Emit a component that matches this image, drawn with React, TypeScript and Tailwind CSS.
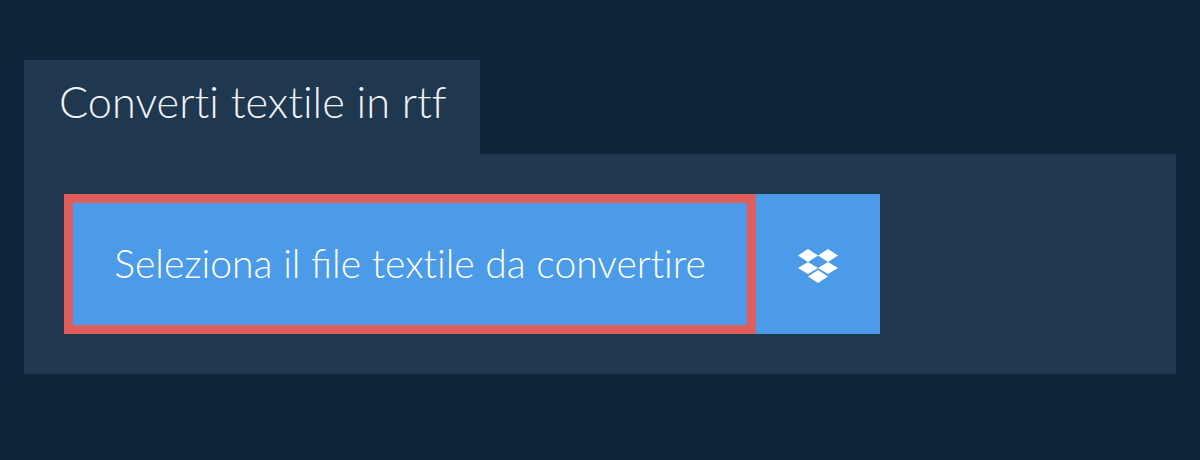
export default function App() {
  return (
    <div className="h-[460px] w-[1200px] bg-[#0f253a] px-6 pt-[60px] font-['Lato',sans-serif]">
      {/* Title tab */}
      <div className="flex h-[94px] w-[456px] items-start bg-[#203750] pl-[35px] pt-[14px]">
        <h1 className="text-[43.3px] leading-[54px] font-light text-[#f0f4f8] [font-variant-ligatures:none]">Converti textile in rtf</h1>
      </div>

      {/* Panel */}
      <div className="flex h-[220px] w-[1152px] bg-[#203750] p-10">
        <button className="h-[140px] w-[692px] border-[9px] border-[#e05d5d] bg-[#4c9be8] pb-0.5 text-center text-[39.1px] font-light text-white">
          {/* only "file" keeps its ligature */}
          <span className="[font-variant-ligatures:none]">Seleziona il </span>
          <span>file</span>
          <span className="[font-variant-ligatures:none]"> textile da convertire</span>
        </button>
        <button className="flex h-[140px] w-[124px] items-center justify-center bg-[#4c9be8]">
          <svg className="mt-1" width="40" height="34" viewBox="0 0 40 34" fill="#fff">
            <path d="M10 0 0 6.5 10 13l10-6.5zM30 0 20 6.5 30 13l10-6.5zM10 13 0 19l10 6 10-6zM30 13l-10 6 10 6 10-6zM20 21 10 27.5 20 34l10-6.5z" />
          </svg>
        </button>
      </div>
    </div>
  );
}
